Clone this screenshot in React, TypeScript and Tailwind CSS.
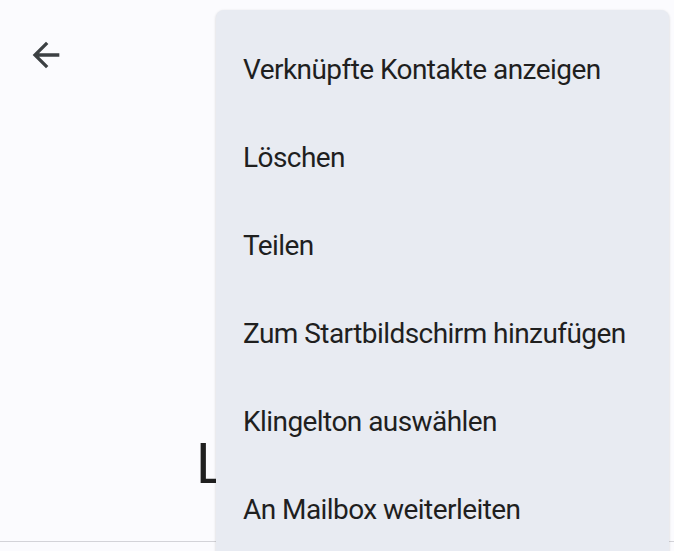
import React from "react";

const menuItems = [
  "Verknüpfte Kontakte anzeigen",
  "Löschen",
  "Teilen",
  "Zum Startbildschirm hinzufügen",
  "Klingelton auswählen",
  "An Mailbox weiterleiten",
];

export default function App() {
  return (
    <div
      className="relative w-[674px] h-[551px] overflow-hidden bg-[#fbfbfe]"
      style={{ fontFamily: "Roboto, 'Noto Sans', sans-serif" }}
    >
      {/* Top bar */}
      <div className="h-[110px] flex items-start pl-[26px] pt-[35px]">
        <button className="w-10 h-10 text-[#3c4043]">
          <svg viewBox="0 0 24 24" width="40" height="40" fill="currentColor">
            <path d="M20 11H7.83l5.59-5.59L12 4l-8 8 8 8 1.41-1.41L7.83 13H20v-2z" />
          </svg>
        </button>
      </div>

      {/* Contact header */}
      <div className="h-[432px] flex flex-col justify-end items-start pl-[196px] border-b border-[#d3d3d8]">
        <div className="pb-[49px] text-[56px] leading-none text-[#1f1f1f] whitespace-nowrap">
          Lena Ma
        </div>
      </div>

      {/* Overflow menu */}
      <div className="absolute left-[216px] top-[10px] w-[453px] h-[560px] rounded-lg bg-[#e8ebf2] shadow-[0_1px_3px_rgba(0,0,0,0.18)] pt-[16px]">
        {menuItems.map((item) => (
          <div
            key={item}
            className="h-[88px] flex items-center px-[27px] text-[28px] tracking-[-0.02em] text-[#1f1f1f] leading-none whitespace-nowrap"
          >
            {item}
          </div>
        ))}
      </div>
    </div>
  );
}
